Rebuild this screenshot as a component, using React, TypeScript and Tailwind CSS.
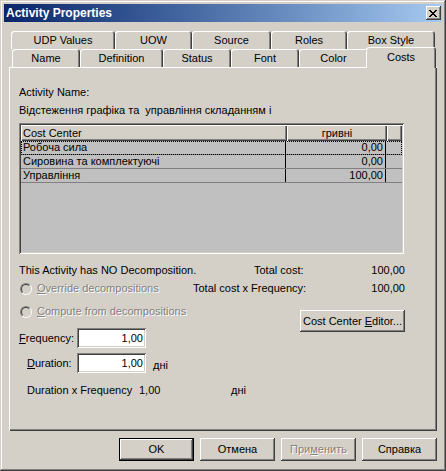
import React from "react";

const raised =
  "shadow-[inset_-1px_-1px_#404040,inset_1px_1px_#ffffff,inset_-2px_-2px_#808080,inset_2px_2px_#d4d0c8]";
const sunken =
  "shadow-[inset_1px_1px_#808080,inset_-1px_-1px_#ffffff,inset_2px_2px_#404040,inset_-2px_-2px_#d4d0c8]";
const tabCls =
  "h-[18px] flex items-center justify-center bg-[#d4d0c8] rounded-t-[3px] shadow-[inset_1px_1px_#ffffff,inset_-1px_0_#404040,inset_-2px_0_#808080]";
const disabledText = "text-[#808080] [text-shadow:1px_1px_0_#ffffff]";

function Tab({ label, w }: { label: string; w: string }) {
  return <div className={`${tabCls} ${w}`}>{label}</div>;
}

function Radio({ children }: { children: React.ReactNode }) {
  return (
    <div className="flex items-center h-[13px]">
      <div className="ml-[1px] w-[12px] h-[12px] rounded-full border border-t-[#808080] border-l-[#808080] border-r-white border-b-white">
        <div className="w-full h-full rounded-full bg-[#d4d0c8] border border-t-[#404040] border-l-[#404040] border-r-[#d4d0c8] border-b-[#d4d0c8]" />
      </div>
      <span className={`ml-[5px] ${disabledText}`}>{children}</span>
    </div>
  );
}

function Btn({
  children,
  def,
  disabled,
  w = "w-[75px]",
  h = "h-[23px]",
}: {
  children: React.ReactNode;
  def?: boolean;
  disabled?: boolean;
  w?: string;
  h?: string;
}) {
  if (def) {
    return (
      <div className={`${w} ${h} border border-black bg-[#d4d0c8]`}>
        <div className={`w-full h-full flex items-center justify-center ${raised}`}>{children}</div>
      </div>
    );
  }
  return (
    <div
      className={`${w} ${h} flex items-center justify-center bg-[#d4d0c8] ${raised} ${
        disabled ? disabledText : ""
      }`}
    >
      {children}
    </div>
  );
}

function Input({ value }: { value: string }) {
  return (
    <div className={`w-[69px] h-[20px] bg-white ${sunken} flex items-center justify-end pr-[3px]`}>
      {value}
    </div>
  );
}

const rows = [
  { name: "Робоча сила", v: "0,00", focus: true },
  { name: "Сировина та комплектуючі", v: "0,00" },
  { name: "Управління", v: "100,00" },
];

export default function App() {
  return (
    <div className="w-[446px] h-[471px] bg-[#d4d0c8] p-[4px] flex flex-col text-[11px] leading-[13px] text-black font-['Liberation_Sans',Arial,sans-serif] shadow-[inset_-1px_-1px_#404040,inset_1px_1px_#d4d0c8,inset_-2px_-2px_#808080,inset_2px_2px_#ffffff]">
      {/* Title bar */}
      <div className="h-[18px] flex items-center justify-between bg-linear-to-r from-[#0a246a] to-[#a6caf0] pl-[2px]">
        <span className="text-white font-bold text-[12px] leading-[14px]">Activity Properties</span>
        <div className={`mr-[1px] w-[15px] h-[14px] bg-[#d4d0c8] ${raised} flex items-center justify-center`}>
          <svg width="8" height="7" viewBox="0 0 8 7" shapeRendering="crispEdges" className="mr-[1px]">
            <rect x="0" y="0" width="2" height="1" fill="#000" />
            <rect x="6" y="0" width="2" height="1" fill="#000" />
            <rect x="1" y="1" width="2" height="1" fill="#000" />
            <rect x="5" y="1" width="2" height="1" fill="#000" />
            <rect x="2" y="2" width="4" height="1" fill="#000" />
            <rect x="3" y="3" width="2" height="1" fill="#000" />
            <rect x="2" y="4" width="4" height="1" fill="#000" />
            <rect x="1" y="5" width="2" height="1" fill="#000" />
            <rect x="5" y="5" width="2" height="1" fill="#000" />
            <rect x="0" y="6" width="2" height="1" fill="#000" />
            <rect x="6" y="6" width="2" height="1" fill="#000" />
          </svg>
        </div>
      </div>

      {/* Tabs + panel */}
      <div className="mt-[9px] ml-[5px] w-[428px] flex flex-col">
        <div className="flex pl-[2px]">
          <Tab label="UDP Values" w="w-[104px]" />
          <Tab label="UOW" w="w-[77px]" />
          <Tab label="Source" w="w-[79px]" />
          <Tab label="Roles" w="w-[76px]" />
          <Tab label="Box Style" w="w-[88px]" />
        </div>
        <div className="flex pl-[3px] h-[18px] items-start">
          <Tab label="Name" w="w-[68px]" />
          <Tab label="Definition" w="w-[83px]" />
          <Tab label="Status" w="w-[68px]" />
          <Tab label="Font" w="w-[68px]" />
          <Tab label="Color" w="w-[69px]" />
          <div className="relative z-10 -ml-[2px] -mt-[2px] w-[70px] h-[21px] flex items-center justify-center pb-[1px] bg-[#d4d0c8] rounded-t-[3px] shadow-[inset_1px_1px_#ffffff,inset_-1px_0_#404040,inset_-2px_0_#808080]">
            Costs
          </div>
        </div>
        <div className="h-[364px] bg-[#d4d0c8] shadow-[inset_1px_1px_#ffffff,inset_-1px_-1px_#404040,inset_-2px_-2px_#808080] pl-[10px] pt-[19px] flex flex-col">
          <div>Activity Name:</div>
          <div className="mt-[5px]">Відстеження графіка та&nbsp; управління складанням і</div>

          {/* List */}
          <div className={`mt-[6px] w-[385px] h-[131px] p-[2px] bg-[#c0c0c0] ${sunken}`}>
            <div className="flex h-[16px]">
              <div className="w-[266px] h-full pl-[2px] flex items-center bg-[#d4d0c8] shadow-[inset_1px_1px_#ffffff,inset_-1px_-1px_#404040,inset_-2px_-2px_#808080]">
                Cost Center
              </div>
              <div className="w-[100px] h-full flex items-center justify-center bg-[#d4d0c8] shadow-[inset_1px_1px_#ffffff,inset_-1px_-1px_#404040,inset_-2px_-2px_#808080]">
                гривні
              </div>
              <div className="flex-1 h-full bg-[#d4d0c8] shadow-[inset_1px_1px_#ffffff,inset_-1px_-1px_#404040,inset_-2px_-2px_#808080]" />
            </div>
            {rows.map((r) => (
              <div
                key={r.name}
                className={`flex h-[14px] border-b border-[#808080] ${
                  r.focus ? "outline-1 outline-dotted outline-black -outline-offset-1" : ""
                }`}
              >
                <div className="w-[265px] pl-[2px] border-r border-black leading-[13px]">{r.name}</div>
                <div className="w-[100px] pr-[2px] text-right border-r border-black leading-[13px]">{r.v}</div>
                <div className="flex-1" />
              </div>
            ))}
          </div>

          {/* Bottom area */}
          <div className="w-[386px] flex flex-col">
            <div className="mt-[10px] flex justify-between h-[13px]">
              <span>This Activity has NO Decomposition.</span>
              <div className="w-[151px] flex justify-between">
                <span>Total cost:</span>
                <span>100,00</span>
              </div>
            </div>
            <div className="mt-[5px] flex justify-between items-center h-[13px]">
              <Radio>
                <span className="underline">O</span>verride decompositions
              </Radio>
              <div className="w-[212px] flex justify-between">
                <span>Total cost x Frequency:</span>
                <span>100,00</span>
              </div>
            </div>
            <div className="mt-[10px] flex justify-between items-start">
              <div className="flex flex-col">
                <Radio>
                  <span className="underline">C</span>ompute from decompositions
                </Radio>
                <div className="mt-[10px] flex items-center h-[20px]">
                  <span className="w-[58px]">
                    <span className="underline">F</span>requency:
                  </span>
                  <Input value="1,00" />
                </div>
              </div>
              <div className="mt-[5px]">
                <Btn w="w-[105px]" h="h-[22px]">
                  Cost Center&nbsp;<span className="underline">E</span>ditor...
                </Btn>
              </div>
            </div>
            <div className="mt-[5px] flex items-center h-[20px] pl-[8px]">
              <span className="w-[50px]">
                <span className="underline">D</span>uration:
              </span>
              <Input value="1,00" />
              <span className="ml-[7px] mt-[4px]">дні</span>
            </div>
            <div className="mt-[11px] flex pl-[8px]">
              <span className="w-[112px]">Duration x Frequency</span>
              <span className="w-[92px]">1,00</span>
              <span>дні</span>
            </div>
          </div>
        </div>
      </div>

      {/* Buttons */}
      <div className="mt-[7px] mr-[5px] flex justify-end gap-[6px]">
        <Btn def>OK</Btn>
        <Btn>Отмена</Btn>
        <Btn disabled>
          При<span className="underline">м</span>енить
        </Btn>
        <Btn>Справка</Btn>
      </div>
    </div>
  );
}
